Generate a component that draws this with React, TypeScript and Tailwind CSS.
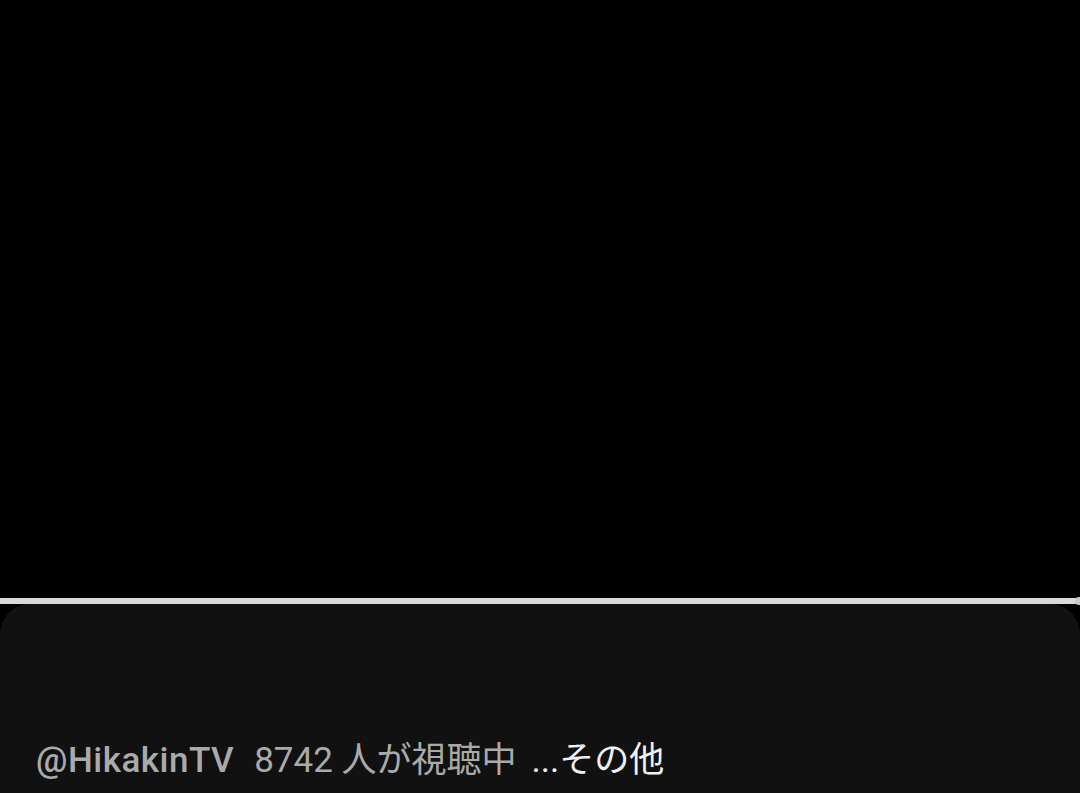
export default function App() {
  return (
    <div className="w-[1080px] h-[793px] bg-black overflow-hidden flex flex-col" style={{ fontFamily: 'Roboto, "Noto Sans CJK JP", sans-serif' }}>
      {/* Player */}
      <div className="h-[598px] bg-black shrink-0" />

      {/* Progress bar */}
      <div className="relative h-[6px] bg-[#d9d9d9] shrink-0">
        <div className="absolute right-[-3px] top-[-1px] w-[8px] h-[8px] rounded-full bg-[#c8c8c8]" />
      </div>

      {/* Info panel */}
      <div className="flex-1 bg-[#111111] rounded-t-[30px] flex flex-col justify-end px-[36px] pb-[8px]">
        <div className="flex items-baseline text-[35px] leading-[48px] whitespace-nowrap">
          <span className="font-medium tracking-[0.5px] text-[#aaaaaa]">@HikakinTV</span>
          <span className="ml-[20px] text-[#aaaaaa]">8742 人が視聴中</span>
          <span className="ml-[15px] text-[#f1f1f1]">...その他</span>
        </div>
      </div>
    </div>
  );
}
